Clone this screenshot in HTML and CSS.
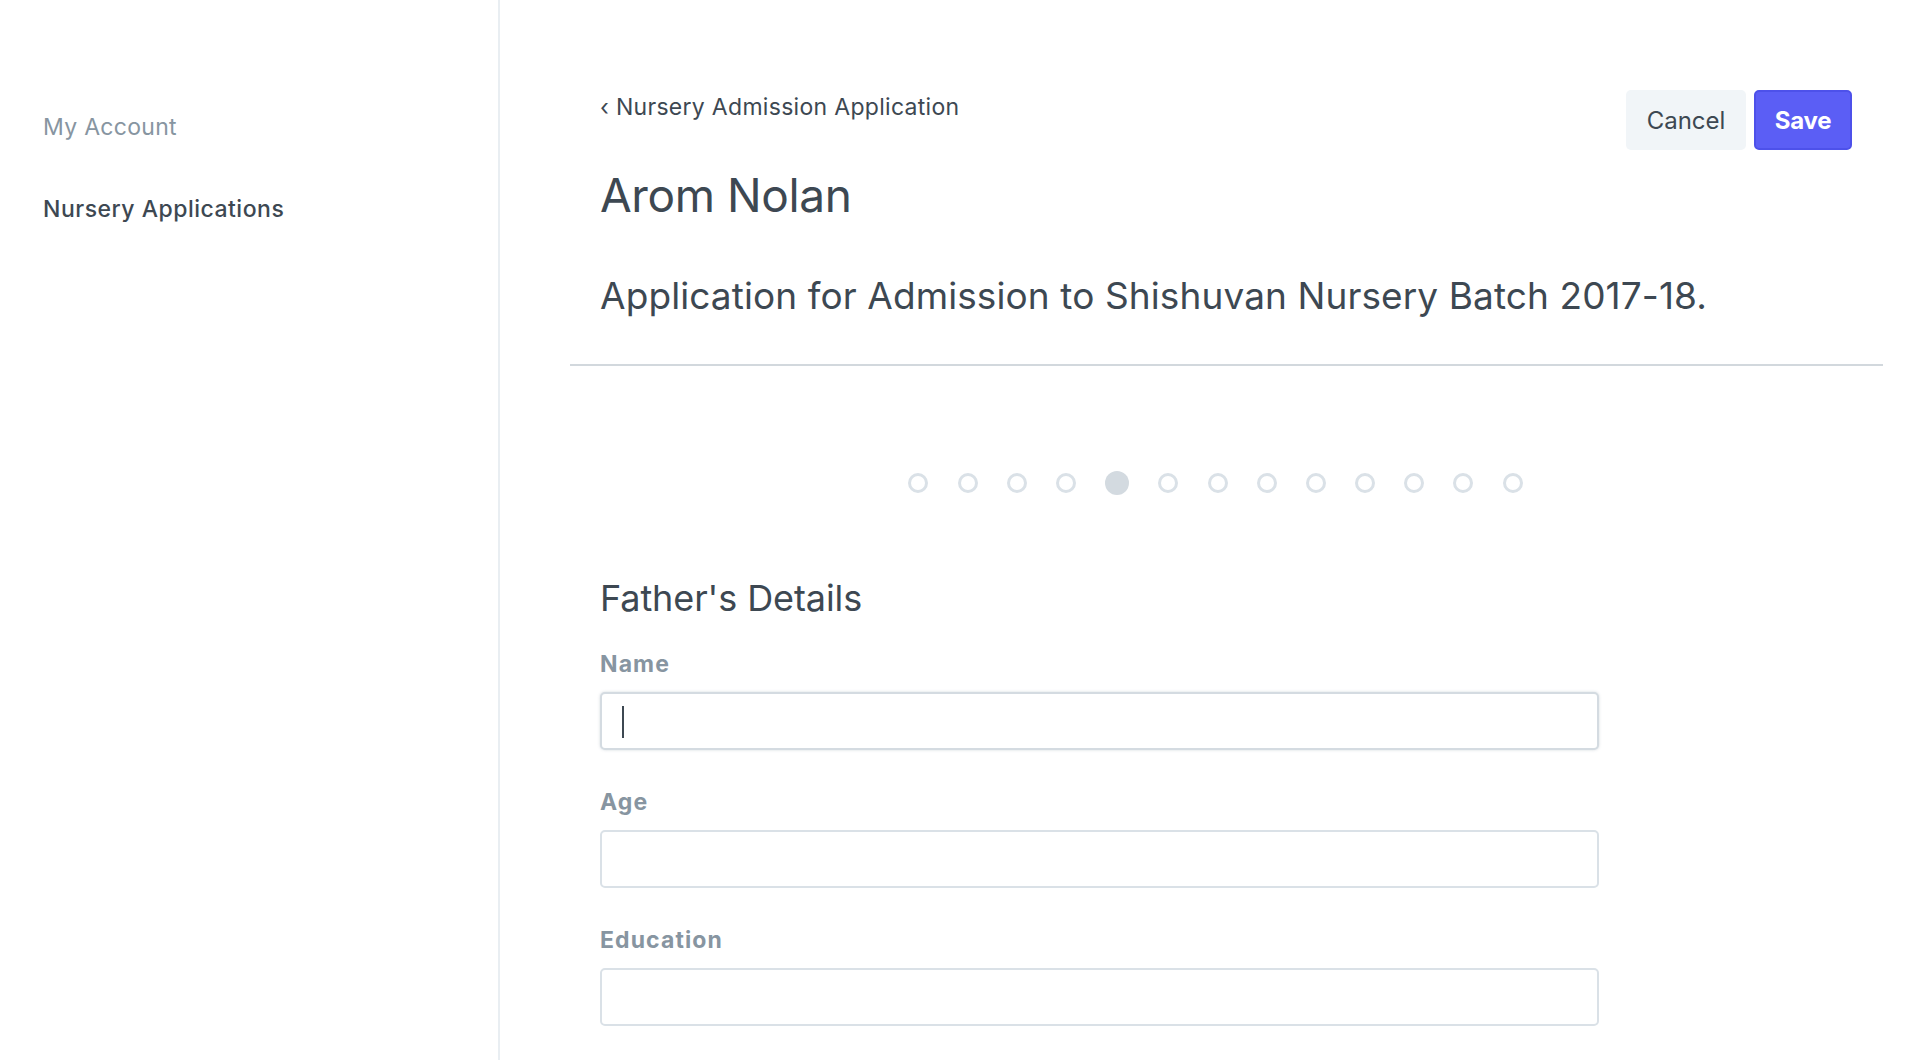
FILE: index.html
```html
<!DOCTYPE html>
<html lang="en">
<head>
<meta charset="utf-8">
<title>Nursery Admission Application</title>
<link rel="stylesheet" href="styles.css">
</head>
<body>
<div class="app">
  <aside class="sidebar">
    <nav class="nav">
      <a class="nav-link muted" href="#">My Account</a>
      <a class="nav-link active" href="#">Nursery Applications</a>
    </nav>
  </aside>
  <main class="main">
    <div class="header">
      <div class="titles">
        <a class="crumb" href="#"><span class="chev">‹</span> Nursery Admission Application</a>
        <h1 class="name">Arom Nolan</h1>
      </div>
      <div class="actions">
        <button class="btn btn-cancel" type="button">Cancel</button>
        <button class="btn btn-save" type="button">Save</button>
      </div>
    </div>
    <p class="subtitle">Application for Admission to Shishuvan Nursery Batch 2017-18.</p>
    <hr class="divider">
    <div class="steps">
      <span class="dot"></span><span class="dot"></span><span class="dot"></span><span class="dot"></span>
      <span class="dot current"></span>
      <span class="dot"></span><span class="dot"></span><span class="dot"></span><span class="dot"></span>
      <span class="dot"></span><span class="dot"></span><span class="dot"></span><span class="dot"></span>
    </div>
    <section class="form">
      <h2 class="section-title">Father's Details</h2>
      <div class="field">
        <label class="label" for="fname">Name</label>
        <div class="input focused"><span class="caret"></span></div>
      </div>
      <div class="field">
        <label class="label" for="fage">Age</label>
        <div class="input"></div>
      </div>
      <div class="field">
        <label class="label" for="fedu">Education</label>
        <div class="input"></div>
      </div>
    </section>
  </main>
</div>
</body>
</html>
```

FILE: styles.css
```css
* { box-sizing: border-box; }
html, body { margin: 0; padding: 0; background: #fff; }
body {
  font-family: Inter, "Noto Sans", sans-serif;
  color: #3d4852;
  height: 1060px;
  overflow: hidden;
}
.app { display: flex; min-height: 1060px; }
.sidebar {
  width: 500px;
  flex: 0 0 500px;
  border-right: 2px solid #e9eef2;
  padding: 112px 0 0 43px;
}
.nav { display: flex; flex-direction: column; gap: 52px; }
.nav-link {
  text-decoration: none;
  font-size: 23px;
  line-height: 30px;
  letter-spacing: 0.3px;
}
.nav-link.muted { color: #8795a1; }
.nav-link.active { color: #3d4852; font-weight: 500; letter-spacing: 0.5px; }

.main { flex: 1; padding: 0 49px 0 70px; }
.header {
  display: flex;
  justify-content: space-between;
  align-items: flex-start;
  padding: 0 30px;
  margin-top: 90px;
}
.titles { display: flex; flex-direction: column; }
.crumb {
  color: #3d4852;
  text-decoration: none;
  font-size: 23px;
  line-height: 30px;
  margin-top: 2px;
  letter-spacing: 0.3px;
}
.name {
  margin: 45px 0 0;
  font-size: 46px;
  line-height: 56px;
  font-weight: 400;
  letter-spacing: -0.4px;
}
.actions { display: flex; gap: 8px; margin-right: 1px; }
.btn {
  height: 60px;
  border-radius: 5px;
  font-family: inherit;
  font-size: 24px;
  padding: 0;
  cursor: pointer;
}
.btn-cancel {
  width: 120px;
  background: #f1f5f8;
  border: 0;
  color: #3d4852;
}
.btn-save {
  width: 98px;
  background: #5b5ef5;
  border: 2px solid #4d51ea;
  color: #fff;
  font-weight: 700;
  letter-spacing: -0.3px;
}
.subtitle {
  margin: 49px 30px 0;
  font-size: 37px;
  line-height: 48px;
  font-weight: 400;
  letter-spacing: 0.1px;
}
.divider {
  margin: 44px 0 0;
  border: 0;
  height: 2px;
  background: #d2d8dd;
}
.steps {
  margin-top: 105px;
  height: 24px;
  display: flex;
  justify-content: center;
  align-items: center;
  gap: 29.2px;
  padding-right: 22px;
}
.dot {
  width: 20px;
  height: 20px;
  border-radius: 50%;
  border: 3px solid #dae1e7;
  flex: 0 0 auto;
}
.dot.current {
  width: 24px;
  height: 24px;
  border: 0;
  background: #d3dae0;
}
.form { padding: 0 30px; }
.section-title {
  margin: 81px 0 0;
  font-size: 36px;
  line-height: 44px;
  font-weight: 400;
  letter-spacing: -0.1px;
}
.field { display: flex; flex-direction: column; width: 999px; }
.label {
  margin-top: 30px;
  font-size: 23px;
  line-height: 28px;
  font-weight: 700;
  color: #8795a1;
  letter-spacing: 1.1px;
}
.field + .field .label { margin-top: 38px; }
.input {
  margin-top: 14px;
  height: 58px;
  border: 2px solid #dae1e7;
  border-radius: 5px;
  background: #fff;
  position: relative;
}
.input.focused {
  border-color: #d4dbe1;
  box-shadow: 0 0 3px rgba(130, 145, 160, 0.35);
}
.caret {
  position: absolute;
  left: 20px;
  top: 12px;
  width: 2px;
  height: 32px;
  background: #3d4852;
}
```
